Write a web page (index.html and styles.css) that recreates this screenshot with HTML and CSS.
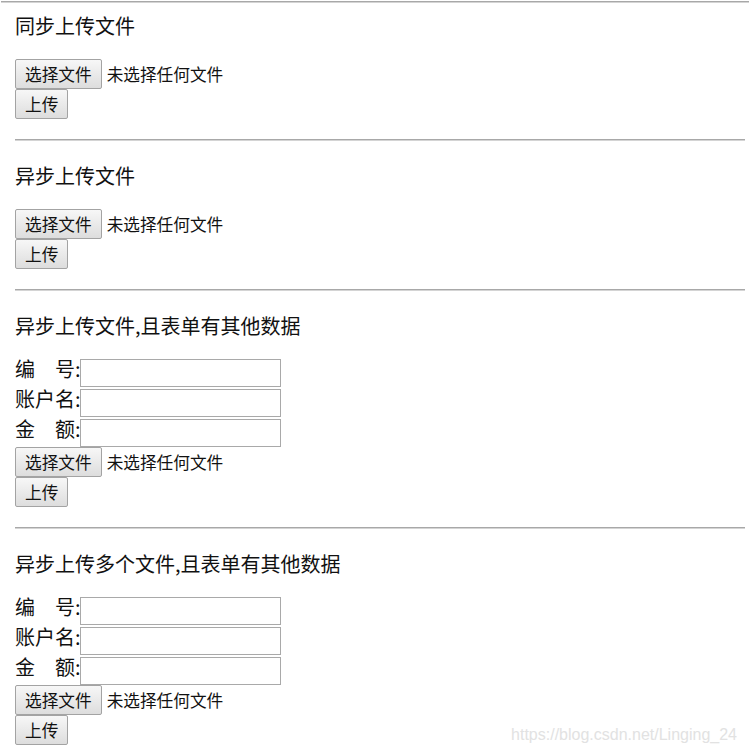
FILE: index.html
```html
<!DOCTYPE html>
<html lang="zh-CN">
<head>
<meta charset="utf-8">
<title>上传文件</title>
<link rel="stylesheet" href="styles.css">
</head>
<body>
<div class="top-rule"></div>

<section class="sec">
  <div class="title">同步上传文件</div>
  <div class="file-row"><span class="btn">选择文件</span><span class="file-name">未选择任何文件</span></div>
  <div class="btn-row"><span class="btn">上传</span></div>
</section>
<div class="rule"></div>

<section class="sec">
  <div class="title">异步上传文件</div>
  <div class="file-row"><span class="btn">选择文件</span><span class="file-name">未选择任何文件</span></div>
  <div class="btn-row"><span class="btn">上传</span></div>
</section>
<div class="rule"></div>

<section class="sec">
  <div class="title">异步上传文件,且表单有其他数据</div>
  <div class="field"><span class="label">编　号:</span><input class="input" type="text"></div>
  <div class="field"><span class="label">账户名:</span><input class="input" type="text"></div>
  <div class="field last"><span class="label">金　额:</span><input class="input" type="text"></div>
  <div class="file-row"><span class="btn">选择文件</span><span class="file-name">未选择任何文件</span></div>
  <div class="btn-row"><span class="btn">上传</span></div>
</section>
<div class="rule"></div>

<section class="sec">
  <div class="title">异步上传多个文件,且表单有其他数据</div>
  <div class="field"><span class="label">编　号:</span><input class="input" type="text"></div>
  <div class="field"><span class="label">账户名:</span><input class="input" type="text"></div>
  <div class="field last"><span class="label">金　额:</span><input class="input" type="text"></div>
  <div class="file-row"><span class="btn">选择文件</span><span class="file-name">未选择任何文件</span></div>
  <div class="btn-row"><span class="btn">上传</span></div>
</section>

<div class="watermark">https://blog.csdn.net/Linging_24</div>
</body>
</html>
```
FILE: styles.css
```css
html, body {
  background: #fff;
}
body {
  margin: 0;
  padding: 0 4px 0 15px;
  font-family: "Noto Sans CJK SC", "Microsoft YaHei", sans-serif;
  color: #111;
  position: relative;
  min-height: 755px;
  box-sizing: border-box;
}
.top-rule {
  margin: 1px -4px 0 -14px;
  border-top: 1px solid #a8a8a8;
  border-bottom: 1px solid #d4d4d4;
}
.rule {
  margin-top: 20px;
  border-top: 1px solid #a8a8a8;
  border-bottom: 1px solid #d4d4d4;
}
.sec .title {
  font-size: 20px;
  line-height: 24px;
  margin: 23px 0 21px;
}
.sec:first-of-type .title {
  margin-top: 11px;
}
.file-row, .btn-row {
  display: flex;
  align-items: center;
  height: 30px;
}
.btn {
  box-sizing: border-box;
  height: 30px;
  padding: 0 9px;
  display: inline-flex;
  align-items: center;
  font-size: 16.67px;
  line-height: 1;
  color: #111;
  border: 1px solid #a3a3a3;
  border-radius: 2px;
  background: linear-gradient(#f7f7f7, #dddddd);
}
.file-name {
  margin-left: 5px;
  font-size: 16.67px;
  line-height: 1;
}
.field {
  display: flex;
  align-items: flex-start;
  height: 28px;
  margin-bottom: 2px;
}
.field.last {
  margin-bottom: 0;
}
.label {
  font-size: 20px;
  line-height: 20px;
  width: 65px;
  white-space: nowrap;
}
.input {
  box-sizing: border-box;
  margin: 0;
  width: 201px;
  height: 28px;
  border: 1px solid #a9a9a9;
  background: #fff;
  padding: 0 2px;
}
.watermark {
  position: absolute;
  right: 12px;
  top: 726px;
  font-family: "Liberation Sans", Arial, sans-serif;
  font-size: 16px;
  color: #e2e2e2;
}
```
